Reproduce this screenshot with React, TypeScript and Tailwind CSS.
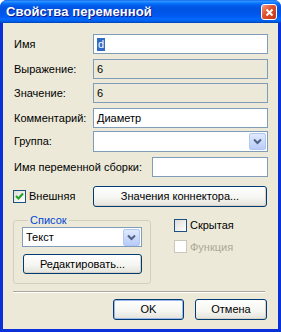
import React from "react";

const font = { fontFamily: '"Liberation Sans", "DejaVu Sans", sans-serif' };

function Input({ value, readOnly, selected, className = "" }: { value?: string; readOnly?: boolean; selected?: boolean; className?: string }) {
  return (
    <div
      className={`h-[20px] border border-[#7F9DB9] flex items-center pl-[3px] text-[11px] text-black ${readOnly ? "bg-[#ECE9D8]" : "bg-white"} ${className}`}
    >
      {selected ? (
        <span className="bg-[#316AC5] text-white leading-[13px] px-[1px]">{value}</span>
      ) : (
        <span>{value}</span>
      )}
    </div>
  );
}

function DropArrow() {
  return (
    <div className="w-[17px] h-[17px] mr-[1px] rounded-[2px] bg-[linear-gradient(to_bottom,#E0EAFD,#B9CCF8)] border border-[#B1C7F3] flex items-center justify-center">
      <svg width="9" height="7" viewBox="0 0 9 7">
        <path d="M1 1.5 L4.5 5 L8 1.5" stroke="#4D6185" strokeWidth="2" fill="none" />
      </svg>
    </div>
  );
}

function Select({ value, className = "" }: { value?: string; className?: string }) {
  return (
    <div className={`h-[20px] border border-[#7F9DB9] bg-white flex items-center justify-between text-[11px] text-black ${className}`}>
      <span className="pl-[3px]">{value}</span>
      <DropArrow />
    </div>
  );
}

function Button({ label, className = "" }: { label: string; className?: string }) {
  return (
    <div
      className={`border border-[#003C74] rounded-[3px] bg-[linear-gradient(to_bottom,#FFFFFF_0%,#F4F4F0_60%,#E3E2DA_100%)] shadow-[inset_-1px_-1px_0_#D6D0C5] flex items-center justify-center text-[11px] text-black ${className}`}
    >
      {label}
    </div>
  );
}

function Check({ checked, disabled }: { checked?: boolean; disabled?: boolean }) {
  return (
    <div
      className={`w-[13px] h-[13px] border flex items-center justify-center ${disabled ? "border-[#CAC8BB] bg-white" : "border-[#1C5180] bg-[linear-gradient(135deg,#DCDCD7,#FFFFFF)]"}`}
    >
      {checked && (
        <svg width="9" height="9" viewBox="0 0 9 9">
          <path d="M1 4 L3.5 6.5 L8 1.5" stroke="#21A121" strokeWidth="2" fill="none" />
        </svg>
      )}
    </div>
  );
}

function Label({ children, className = "", muted }: { children: React.ReactNode; className?: string; muted?: boolean }) {
  return <div className={`text-[11px] ${muted ? "text-[#ACA899]" : "text-black"} ${className}`}>{children}</div>;
}

export default function App() {
  return (
    <div style={font} className="w-[281px] h-[332px] flex flex-col rounded-t-[7px] bg-[#0831D9] overflow-hidden">
      <div className="h-[23px] shrink-0 flex items-center justify-between pl-[6px] pr-[4px] bg-[linear-gradient(to_bottom,#0058EE_0%,#3593FF_4%,#288EFF_8%,#127DFF_12%,#036FFC_16%,#0262EE_22%,#0057E5_30%,#0054E3_40%,#0055EB_60%,#005BF5_72%,#026AFE_82%,#0062EF_90%,#0052D6_96%,#0040AB_100%)]">
        <span className="text-white font-bold text-[13px] [text-shadow:1px_1px_0_#0A1883] tracking-[0.1px]">
          Свойства переменной
        </span>
        <div className="w-[16px] h-[16px] mt-[1px] rounded-[3px] border border-white bg-[linear-gradient(135deg,#F0A08A,#E0502A_45%,#C2351A)] flex items-center justify-center">
          <svg width="9" height="9" viewBox="0 0 9 9">
            <path d="M1.5 1.5 L7.5 7.5 M7.5 1.5 L1.5 7.5" stroke="white" strokeWidth="2" />
          </svg>
        </div>
      </div>
      <div className="flex-1 mx-[3px] mb-[3px] bg-[#ECE9D8] pl-[11px] pr-[10px] flex flex-col">
        <div className="mt-[11px] flex items-center">
          <Label className="w-[79px]">Имя</Label>
          <Input value="d" selected className="flex-1" />
        </div>
        <div className="mt-[5px] flex items-center">
          <Label className="w-[79px]">Выражение:</Label>
          <Input value="6" readOnly className="flex-1" />
        </div>
        <div className="mt-[4px] flex items-center">
          <Label className="w-[79px]">Значение:</Label>
          <Input value="6" readOnly className="flex-1" />
        </div>
        <div className="mt-[5px] flex items-center">
          <Label className="w-[79px]">Комментарий:</Label>
          <Input value="Диаметр" className="flex-1" />
        </div>
        <div className="mt-[3px] flex items-center">
          <Label className="w-[79px]">Группа:</Label>
          <Select className="flex-1 h-[21px]" />
        </div>
        <div className="mt-[5px] flex items-center">
          <Label className="w-[138px]">Имя переменной сборки:</Label>
          <Input className="flex-1" />
        </div>
        <div className="mt-[9px] flex items-center">
          <div className="w-[80px] flex items-center gap-[3px] -ml-[1px]">
            <Check checked />
            <Label>Внешняя</Label>
          </div>
          <Button label="Значения коннектора..." className="flex-1 h-[21px] mr-[1px]" />
        </div>
        <div className="mt-[6px] flex">
          <fieldset className="w-[138px] -ml-[1px] border border-[#D0D0BF] rounded-[3px] pl-[8px] pr-[8px] pb-[9px] pt-0">
            <legend className="ml-[6px] px-[2px] text-[11px] text-[#0046D5] leading-[14px]">Список</legend>
            <Select value="Текст" className="h-[19px]" />
            <Button label="Редактировать..." className="mt-[7px] h-[20px] ml-[1px]" />
          </fieldset>
          <div className="ml-[23px] mt-[4px] flex flex-col">
            <div className="flex items-center gap-[3px]">
              <Check />
              <Label>Скрытая</Label>
            </div>
            <div className="mt-[5px] flex items-center gap-[3px]">
              <Check disabled />
              <Label muted>Функция</Label>
            </div>
          </div>
        </div>
        <div className="mt-[7px] -ml-[1px] mr-[3px] h-[2px] border-t border-[#ACA899] border-b border-b-white" />
        <div className="mt-[6px] flex justify-end gap-[11px] pr-[1px]">
          <Button label="OK" className="w-[71px] h-[21px] border-[#003C74] shadow-[inset_0_0_0_1px_#9DB7EB]" />
          <Button label="Отмена" className="w-[72px] h-[21px]" />
        </div>
      </div>
    </div>
  );
}
